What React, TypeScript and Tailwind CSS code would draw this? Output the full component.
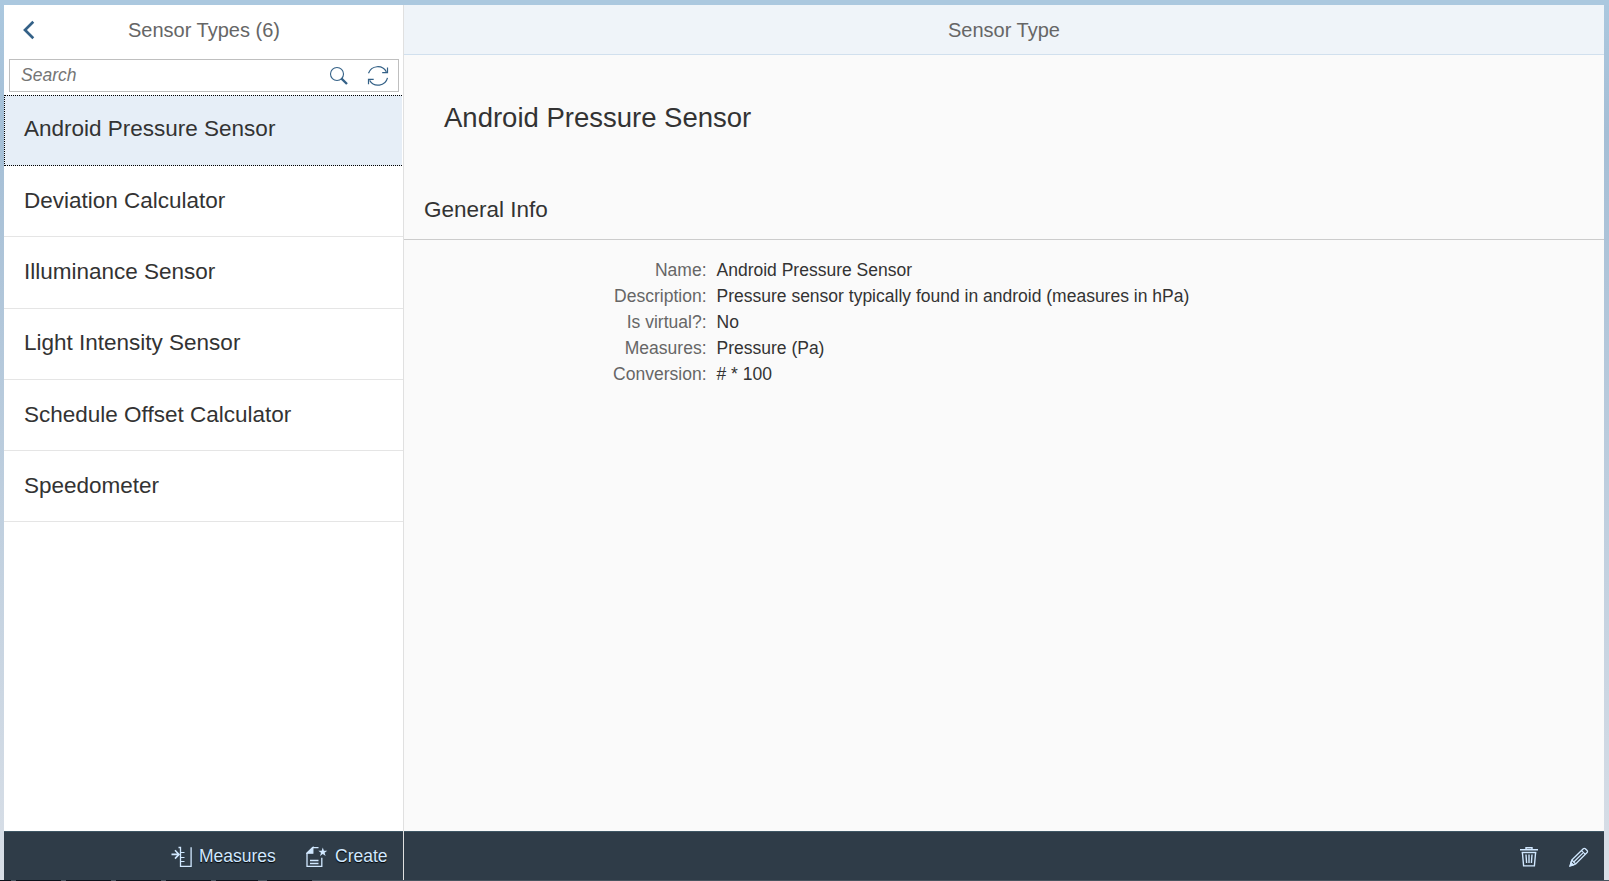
import React from "react";

const sensorTypes = [
  "Android Pressure Sensor",
  "Deviation Calculator",
  "Illuminance Sensor",
  "Light Intensity Sensor",
  "Schedule Offset Calculator",
  "Speedometer",
];

const details = [
  { label: "Name:", value: "Android Pressure Sensor" },
  { label: "Description:", value: "Pressure sensor typically found in android (measures in hPa)" },
  { label: "Is virtual?:", value: "No" },
  { label: "Measures:", value: "Pressure (Pa)" },
  { label: "Conversion:", value: "# * 100" },
];

function BackIcon() {
  return (
    <svg width="12" height="20" viewBox="0 0 12 20" fill="none" stroke="#346187" strokeWidth="2.7">
      <path d="M10.3 1.8 2 10l8.3 8.2" />
    </svg>
  );
}

function SearchIcon() {
  return (
    <svg width="20" height="20" viewBox="0 0 20 20" fill="none" stroke="#346187">
      <circle cx="8" cy="8" r="6.5" strokeWidth="1.1" />
      <path d="M12.3 12.4 18 18" strokeWidth="2.3" />
    </svg>
  );
}

function RefreshIcon() {
  return (
    <svg width="22" height="22" viewBox="0 0 22 22" fill="none" stroke="#346187" strokeWidth="1.2">
      <path d="M1.5 8.3a9.8 9.8 0 0 1 17.9-1.4" />
      <path d="M20.5 2.6v5h-5.3" />
      <path d="M20.5 12.8a9.8 9.8 0 0 1-17.9 2.6" />
      <path d="M1.5 19.2v-4.8h5.2" />
    </svg>
  );
}

function MeasuresIcon() {
  return (
    <svg width="22" height="22" viewBox="0 0 22 22" fill="none" stroke="#d1e8ff" strokeWidth="1.3">
      <path d="M7.5 1.5h2v18.9h10.6V1.2" />
      <path d="M9.5 6.5h4M9.5 11.5h4M9.5 15.5h4" strokeWidth="1" />
      <path d="M0.5 8.4h7.5M4 4.2l4 4.2-4 4.2" strokeWidth="1.6" />
    </svg>
  );
}

function CreateIcon() {
  return (
    <svg width="22" height="22" viewBox="0 0 22 22" fill="none" stroke="#d1e8ff" strokeWidth="1.3">
      <path d="M12.5 1.6H6.7L1 7.2v13.2h14.8v-8.6" />
      <path d="M6.8 1.5v5.7H1z" fill="#d1e8ff" />
      <path d="M4 14.5h8.5M4 17.5h8.5" />
      <path
        d="m16.8 1.5 1.1 3.2h3.4l-2.7 2 1 3.3-2.8-2-2.8 2 1-3.3-2.7-2h3.4z"
        fill="#d1e8ff"
        stroke="none"
      />
    </svg>
  );
}

function TrashIcon() {
  return (
    <svg width="20" height="22" viewBox="0 0 20 22" fill="none" stroke="#d1e8ff" strokeWidth="1.4">
      <path d="M1 3.7h18M7 3V1.7h6V3" />
      <path d="M2.7 6.5h14.6" />
      <path d="m3.4 6.5 1.2 13.4h10.8l1.2-13.4" />
      <path d="m7 8.5.6 8.5M10 8.5V17M13 8.5l-.6 8.5" />
    </svg>
  );
}

function EditIcon() {
  return (
    <svg width="20" height="20" viewBox="0 0 20 20" fill="none" stroke="#d1e8ff" strokeWidth="1.3">
      <path d="M2.8 13 14.3 1.7a1.4 1.4 0 0 1 2 0l1.8 1.8a1.4 1.4 0 0 1 0 2L6.7 17l-5.4 1.6z" />
      <path d="m12.5 3.6 3.8 3.8M2.8 13l3.9 4M5 14.8l8.8-8.7" />
      <path d="m1 19 1-3.5 2.4 2.5z" fill="#d1e8ff" />
    </svg>
  );
}

export default function App() {
  return (
    <div className="flex h-[881px] w-[1609px] flex-col overflow-hidden bg-linear-to-b from-[#abc8df] from-0% via-[#a5bfd6] via-15% to-[#d9dfe7] to-100% font-['Liberation_Sans',Arial,sans-serif]">
      <div className="h-[5px] shrink-0 bg-[#abc8df]" />
      <div className="ml-1 mr-[5px] flex h-[875px] shrink-0">
        <aside className="flex w-[400px] shrink-0 flex-col border-r border-[#e0e0e0] bg-white">
          <header className="flex h-[50px] shrink-0 items-center pl-[19px]">
            <button className="flex">
              <BackIcon />
            </button>
            <h1 className="w-[338px] text-center text-xl text-[#666]">Sensor Types (6)</h1>
          </header>
          <div className="ml-[5px] mr-1 mt-1 flex h-[33px] shrink-0 items-center border border-[#bfbfbf] pl-[11px] pr-[9px]">
            <span className="flex-1 pb-0.5 text-[17.5px] leading-6 italic text-[#757575]">Search</span>
            <SearchIcon />
            <span className="ml-[18px] flex">
              <RefreshIcon />
            </span>
          </div>
          <ul className="mt-[3px]">
            {sensorTypes.map((name, index) => (
              <li
                key={name}
                className={
                  index === 0
                    ? "mr-px flex h-[71px] items-center border-y border-l border-dotted border-black bg-[#e6eef7] pb-[3px] pl-[19px] text-[22.5px] text-[#333]"
                    : "flex h-[71.25px] items-center border-b border-[#e5e5e5] pb-px pl-5 text-[22.5px] text-[#333]"
                }
              >
                {name}
              </li>
            ))}
          </ul>
          <footer className="mt-auto flex h-[49px] shrink-0 items-center border-t border-[#3e5664] bg-[#2f3c48] pl-[167px] pt-px text-[17.5px] text-[#d1e8ff] [text-shadow:0_1px_1px_#000]">
            <MeasuresIcon />
            <span className="ml-[6px] w-[107px]">Measures</span>
            <CreateIcon />
            <span className="ml-[7px]">Create</span>
          </footer>
        </aside>
        <main className="flex flex-1 flex-col bg-[#fafafa]">
          <header className="flex h-[50px] shrink-0 items-center justify-center border-b border-[#d1e0ee] bg-[#eff4f9] text-xl text-[#666]">
            Sensor Type
          </header>
          <h2 className="mt-[47px] pl-10 text-[27.5px] leading-8 text-[#333]">Android Pressure Sensor</h2>
          <section className="mt-[45px]">
            <h3 className="h-[61px] border-b border-[#ccc] pl-5 text-[22.5px] leading-[61px] text-[#333]">
              General Info
            </h3>
            <dl className="mt-[17px] grid grid-cols-[302.5px_1fr] gap-x-2.5 text-[17.5px] leading-[26px]">
              {details.map(({ label, value }) => (
                <React.Fragment key={label}>
                  <dt className="text-right text-[#666]">{label}</dt>
                  <dd className="text-[#333]">{value}</dd>
                </React.Fragment>
              ))}
            </dl>
          </section>
          <footer className="mt-auto flex h-[49px] shrink-0 items-center justify-end gap-[30px] border-t border-[#3e5664] bg-[#2f3c48] pr-[15px] pt-px">
            <TrashIcon />
            <EditIcon />
          </footer>
        </main>
      </div>
      <div className="flex h-px shrink-0 gap-[5px] bg-[#48545f]">
        <div className="w-[11px] bg-[#0d121b]" />
        <div className="w-[45px] bg-[#0d121b]" />
        <div className="w-[45px] bg-[#0d121b]" />
        <div className="w-[45px] bg-[#0d121b]" />
        <div className="w-[45px] bg-[#0d121b]" />
        <div className="w-[42px] bg-[#0d121b]" />
        <div className="ml-1 w-[45px] bg-[#0d121b]" />
      </div>
    </div>
  );
}
